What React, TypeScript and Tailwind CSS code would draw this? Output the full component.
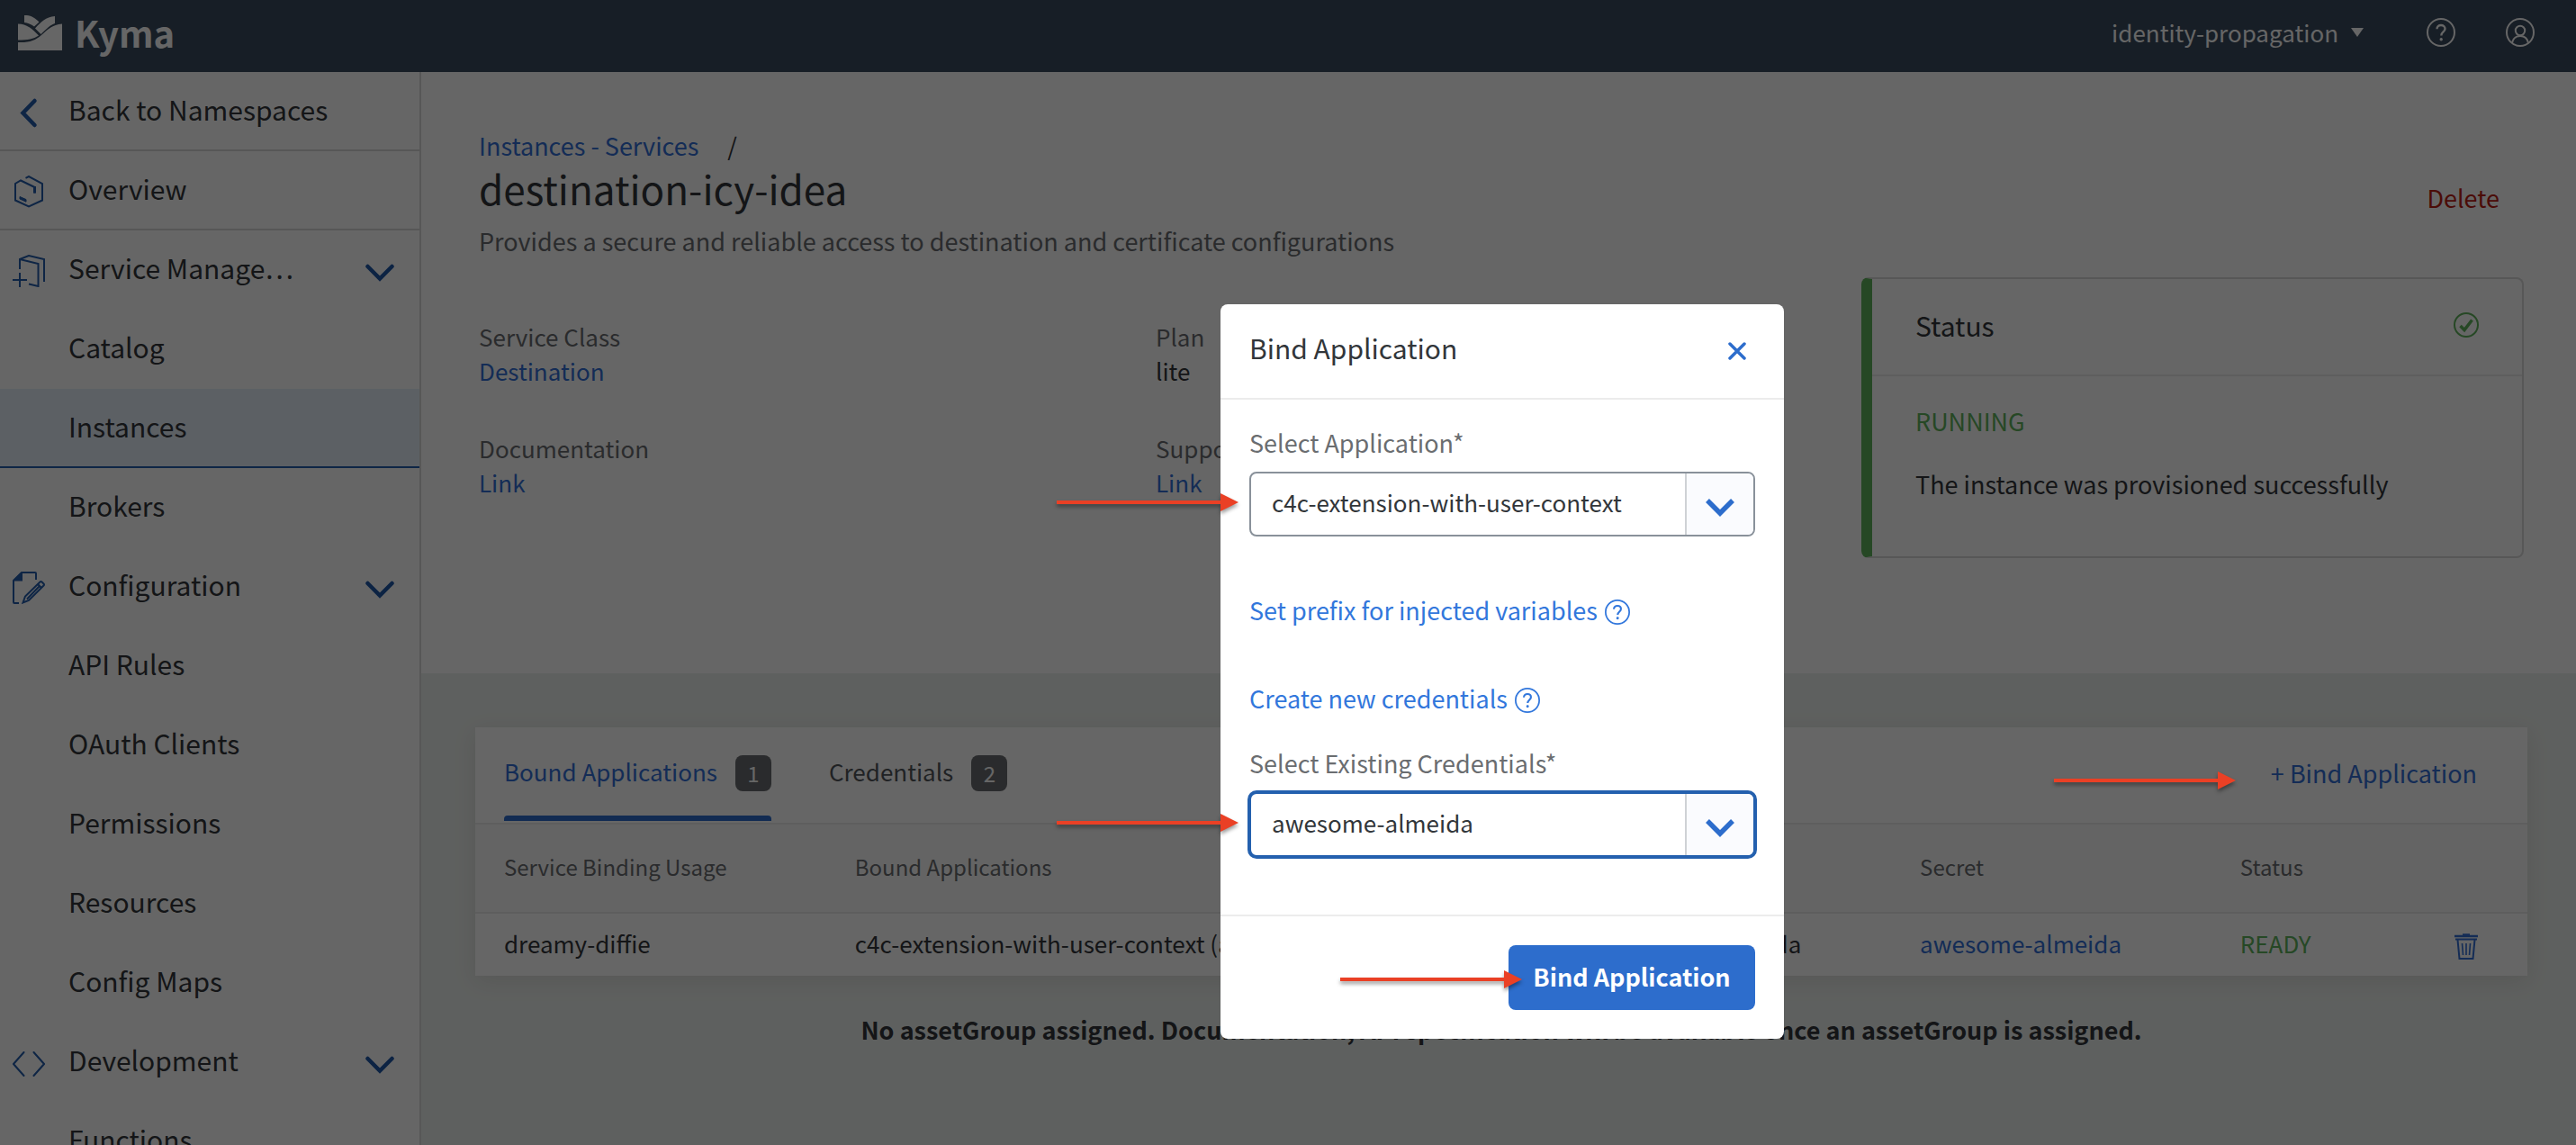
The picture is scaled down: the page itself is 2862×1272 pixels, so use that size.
import React from "react";

type NavEntry = {
  label: string;
  icon?: React.ReactNode;
  kind: "top" | "group" | "leaf";
  selected?: boolean;
};

function KymaLogo() {
  return (
    <svg viewBox="0 0 49 39" className="h-[39px] w-[49px] shrink-0" fill="#fff" aria-hidden="true">
      <path d="M7 0c7-.5 12 3 16.500 7.500L18 12.500C14.500 10 11 8.500 7 8z" />
      <path d="M41 1v8c-5 1.500-9 6-15.500 12L19 14.500C25 8 31 1.500 41 1z" />
      <path d="M0 9.500c10 0 15.500 5.500 23 13-6 4-12 5-23 5z" />
      <path d="M0 30c13 .5 19-2 26-8 7-6.500 12-11.500 23-12.500V39H0z" />
    </svg>
  );
}

function HelpIcon({ className }: { className: string }) {
  return (
    <svg viewBox="0 0 32 32" className={className} fill="none" stroke="currentColor" strokeWidth="2" aria-hidden="true">
      <circle cx="16" cy="16" r="15" />
      <path d="M11.500 12.200c0-2.600 1.900-4.200 4.500-4.200s4.500 1.600 4.500 4c0 3.400-4.200 3.400-4.200 7.400" strokeWidth="2.400" />
      <circle cx="16.200" cy="23.800" r="1.100" fill="currentColor" strokeWidth="1.200" />
    </svg>
  );
}

function UserIcon() {
  return (
    <svg viewBox="0 0 32 32" className="size-8" fill="none" stroke="currentColor" strokeWidth="2" aria-hidden="true">
      <circle cx="16" cy="16" r="15" />
      <circle cx="16" cy="14" r="5.200" />
      <path d="M7 28c1-5.500 4.500-8 9-8s8 2.500 9 8" />
    </svg>
  );
}

function ChevronDown({ className }: { className: string }) {
  return (
    <svg viewBox="0 0 32 20" className={className} fill="none" stroke="currentColor" strokeWidth="4.500" strokeLinecap="round" aria-hidden="true">
      <path d="M2.500 3 16 16.500 29.500 3" />
    </svg>
  );
}

function ComboChevron() {
  return (
    <svg viewBox="0 0 32 20" className="mt-2 h-5 w-8" fill="none" stroke="currentColor" strokeWidth="5.500" aria-hidden="true">
      <path d="M2 2 16 16 30 2" />
    </svg>
  );
}

const backIcon = (
  <svg viewBox="0 0 36 36" className="size-9" fill="none" stroke="currentColor" strokeWidth="4.500" strokeLinecap="round" aria-hidden="true">
    <path d="M24.500 5 11.500 18.500 24.500 32" />
  </svg>
);

const overviewIcon = (
  <svg viewBox="0 0 36 36" className="size-9" fill="none" stroke="currentColor" strokeWidth="2" aria-hidden="true">
    <path d="M14.500 2.800 18 1l15 8v18.500L18 34.500l-15-7V9l6-3.500 15.500 7.500v6.500" />
    <path d="M24.500 12v7.500" strokeWidth="3" />
    <path d="M8 23.500v2.500l7 3.200v-2.600z" fill="currentColor" strokeWidth="1" />
  </svg>
);

const serviceIcon = (
  <svg viewBox="0 0 36 36" className="size-9" fill="none" stroke="currentColor" strokeWidth="2" aria-hidden="true">
    <path d="M8 16V5l10-4 17 4v25" />
    <path d="M8 5l20.500 5v25L18 32.500" />
    <path d="M0 28h16M8 20v16" />
  </svg>
);

const configIcon = (
  <svg viewBox="0 0 36 36" className="size-9" fill="none" stroke="currentColor" strokeWidth="2" aria-hidden="true">
    <path d="M26 9V2q0-1-1-1H10L1 10v24q0 1 1 1h5" />
    <path d="M1 10.500V9l8.500-8H11v9.500z" fill="currentColor" stroke="none" />
    <path d="M11.500 34.500l2.500-7L30.500 11.500q1-1 2 0l2 2q1 1 0 2L18 32z" />
    <path d="M28 14l4 4M16 30.500 29.500 16.500" />
  </svg>
);

const codeIcon = (
  <svg viewBox="0 0 36 36" className="size-9" fill="none" stroke="currentColor" strokeWidth="2" strokeLinecap="round" aria-hidden="true">
    <path d="M12.500 6 1 19l11.500 13M23.500 6 35 19 23.500 32" />
  </svg>
);

const nav: NavEntry[] = [
  { label: "Back to Namespaces", icon: backIcon, kind: "top" },
  { label: "Overview", icon: overviewIcon, kind: "top" },
  { label: "Service Manage…", icon: serviceIcon, kind: "group" },
  { label: "Catalog", kind: "leaf" },
  { label: "Instances", kind: "leaf", selected: true },
  { label: "Brokers", kind: "leaf" },
  { label: "Configuration", icon: configIcon, kind: "group" },
  { label: "API Rules", kind: "leaf" },
  { label: "OAuth Clients", kind: "leaf" },
  { label: "Permissions", kind: "leaf" },
  { label: "Resources", kind: "leaf" },
  { label: "Config Maps", kind: "leaf" },
  { label: "Development", icon: codeIcon, kind: "group" },
  { label: "Functions", kind: "leaf" },
];

function NavItem({ entry }: { entry: NavEntry }) {
  const border = entry.selected
    ? "border-[#2460ae] bg-[#e6effa]"
    : entry.kind === "top"
      ? "border-[#d9d9d9]"
      : "border-transparent";
  const shared = `flex h-[88px] w-full items-center border-b-2 pr-7 pl-[14px] text-left ${border}`;
  const inner = (
    <>
      <span className="mr-[26px] flex size-9 shrink-0 items-center justify-center pt-1 text-[#245dac]">{entry.icon}</span>
      <span className="flex-1 pb-1 text-[30px] leading-10 text-[#32363a]">{entry.label}</span>
      {entry.kind === "group" && <ChevronDown className="mt-2 h-5 w-8 text-[#1f58a8]" />}
    </>
  );
  return (
    <li>
      {entry.kind === "group" ? (
        <button type="button" className={shared}>{inner}</button>
      ) : (
        <a href="#" className={shared} aria-current={entry.selected ? "page" : undefined}>{inner}</a>
      )}
    </li>
  );
}

function Arrow() {
  return (
    <svg viewBox="0 0 202 20" className="h-5 w-[202px] overflow-visible drop-shadow-[0_3px_2px_rgba(0,0,0,0.4)]" fill="#ea4025" aria-hidden="true">
      <path d="M0 8h182V0l20 10-20 10v-8H0z" />
    </svg>
  );
}

function Fact({ term, children }: { term: string; children: React.ReactNode }) {
  return (
    <div>
      <dt className="text-[#6a6d70]">{term}</dt>
      <dd>{children}</dd>
    </div>
  );
}

function StatusCard() {
  return (
    <section className="rounded-lg border-2 border-l-12 border-[#d9d9d9] border-l-[#60b35c] bg-white">
      <div className="flex h-[108px] items-center justify-between border-b-2 border-[#ececec] pr-12 pb-1 pl-12">
        <h2 className="text-[30px]">Status</h2>
        <svg viewBox="0 0 28 28" className="size-7 text-[#60b35c]" fill="none" stroke="currentColor" strokeWidth="2" aria-label="Running">
          <circle cx="14" cy="14" r="13" />
          <path d="M7.500 15 12 19.500 20.500 8.500" strokeWidth="3.500" />
        </svg>
      </div>
      <div className="px-12 pt-[30px] pb-[60px] leading-10">
        <p className="text-[#60b35c]">RUNNING</p>
        <p className="mt-[30px]">The instance was provisioned successfully</p>
      </div>
    </section>
  );
}

function Tab({ label, count, active }: { label: string; count: number; active?: boolean }) {
  return (
    <button type="button" role="tab" aria-selected={!!active} className="flex h-[104px] flex-col">
      <span className="flex flex-1 items-center gap-5">
        <span className={active ? "text-[#326fd6]" : "text-[#51555a]"}>{label}</span>
        <span className="mt-1 flex size-10 items-center justify-center rounded-lg bg-[#6a6d70] text-2xl text-white">{count}</span>
      </span>
      <span className={active ? "h-[6px] w-full rounded-t bg-[#2d6dcc]" : "h-[6px] w-full"} />
    </button>
  );
}

function TrashIcon() {
  return (
    <svg viewBox="0 0 26 29" className="mt-1 h-[29px] w-[26px]" fill="none" stroke="currentColor" strokeWidth="2" aria-hidden="true">
      <path d="M0 3h26M9 1.500h8" strokeWidth="2.400" />
      <path d="M1 6.500h24M3.500 7l2 21h15l2-21" />
      <path d="M8.500 11l1 13M13 11v13M17.500 11l-1 13" strokeWidth="1.600" />
    </svg>
  );
}

function BoundApplications() {
  return (
    <section className="bg-white text-[26px] shadow-[0_6px_24px_rgba(60,40,40,0.1)]">
      <div className="flex h-[108px] items-start justify-between border-b-2 border-[#ececec] pr-14 pl-8">
        <div role="tablist" className="flex gap-16">
          <Tab label="Bound Applications" count={1} active />
          <Tab label="Credentials" count={2} />
        </div>
        <div className="relative self-center pb-1">
          <div className="absolute top-1/2 right-full z-20 mt-[-4px] mr-[39px]">
            <Arrow />
          </div>
          <button type="button" className="text-[27px] text-[#326fd6]">+ Bind Application</button>
        </div>
      </div>
      <table className="w-full table-fixed text-left">
        <colgroup>
          <col className="w-[18.500%]" />
          <col className="w-[36.300%]" />
          <col className="w-[15.600%]" />
          <col className="w-[15.600%]" />
          <col className="w-[9%]" />
          <col className="w-[5%]" />
        </colgroup>
        <thead>
          <tr className="h-[98px] border-b-2 border-[#ececec] bg-[#fafafa] text-2xl text-[#6a6d70]">
            <th scope="col" className="pb-1 pl-8 font-normal">Service Binding Usage</th>
            <th scope="col" className="pb-1 font-normal">Bound Applications</th>
            <th scope="col" className="pb-1 font-normal">Service Binding</th>
            <th scope="col" className="pb-1 font-normal">Secret</th>
            <th scope="col" className="pb-1 font-normal">Status</th>
            <th scope="col" aria-label="Actions" />
          </tr>
        </thead>
        <tbody>
          <tr className="h-[70px]">
            <td className="pb-1 pl-8">dreamy-diffie</td>
            <td className="pb-1">c4c-extension-with-user-context (application)</td>
            <td className="pb-1">awesome-almeida</td>
            <td className="pb-1"><a href="#" className="text-[#326fd6]">awesome-almeida</a></td>
            <td className="pb-1 text-[#60b35c]">READY</td>
            <td className="pr-[55px]">
              <button type="button" aria-label="Delete binding" className="ml-auto block text-[#326fd6]"><TrashIcon /></button>
            </td>
          </tr>
        </tbody>
      </table>
    </section>
  );
}

function ComboBox({ id, label, value, focused }: { id: string; label: string; value: string; focused?: boolean }) {
  const frame = focused
    ? "border-[#2460ae] ring-2 ring-[#2460ae]"
    : "border-[#89919a]";
  return (
    <div>
      <label htmlFor={id} className="block text-[#6a6d70]">{label}</label>
      <div className="relative mt-3">
        <div className="absolute top-1/2 right-full mt-[-12px] mr-3">
          <Arrow />
        </div>
        <div className={`flex h-[72px] overflow-hidden rounded-lg border-2 bg-white ${frame}`}>
          <input id={id} defaultValue={value} className="min-w-0 flex-1 pb-1 pl-[23px] text-[26px] outline-none" />
          <button type="button" aria-label={`Show options for ${label}`} className="flex w-[76px] items-center justify-center border-l-2 border-[#cfd2d5] bg-[#fafbfe] text-[#2d6dcc]">
            <ComboChevron />
          </button>
        </div>
      </div>
    </div>
  );
}

function BindDialog() {
  return (
    <div role="dialog" aria-modal="true" aria-labelledby="bind-title" className="w-[626px] rounded-lg bg-white">
      <div className="flex h-[106px] items-center justify-between border-b-2 border-[#ececec] pr-[42px] pl-8">
        <h2 id="bind-title" className="pb-2 text-[30px]">Bind Application</h2>
        <button type="button" aria-label="Close" className="text-[#2d6dcc]">
          <svg viewBox="0 0 20 20" className="size-5" fill="none" stroke="currentColor" strokeWidth="3.500" strokeLinecap="round" aria-hidden="true">
            <path d="M2 2 18 18M18 2 2 18" />
          </svg>
        </button>
      </div>
      <div className="px-8 pt-7 pb-16">
        <ComboBox id="application" label="Select Application*" value="c4c-extension-with-user-context" />
        <button type="button" className="mt-[62px] flex items-center gap-2 text-[#3277dc]">
          Set prefix for injected variables
          <HelpIcon className="mt-1 size-7" />
        </button>
        <button type="button" className="mt-[58px] mb-8 flex items-center gap-2 text-[#3277dc]">
          Create new credentials
          <HelpIcon className="mt-1 size-7" />
        </button>
        <ComboBox id="credentials" label="Select Existing Credentials*" value="awesome-almeida" focused />
      </div>
      <div className="flex justify-end border-t-2 border-[#ececec] px-8 py-8">
        <div className="relative">
          <button type="button" className="h-[72px] w-[274px] rounded-lg bg-[#2d6dcc] pb-0.5 font-bold text-white">Bind Application</button>
          <div className="absolute top-1/2 right-full mt-[-8px] mr-[-15px]">
            <Arrow />
          </div>
        </div>
      </div>
    </div>
  );
}

export default function App() {
  return (
    <div className="relative flex h-screen flex-col overflow-hidden bg-white font-['Noto_Sans_CJK_SC',sans-serif] text-[27px] leading-10 text-[#32363a]">
      <header className="flex h-20 shrink-0 items-center bg-[#3a4b5f] pr-[46px] pb-2 pl-5 text-white">
        <a href="#" className="flex items-center gap-[14px]">
          <KymaLogo />
          <span className="text-[40px] leading-[60px] font-bold">Kyma</span>
        </a>
        <button type="button" className="ml-auto flex items-center gap-[14px] text-[26px]">
          identity-propagation
          <svg viewBox="0 0 14 10" className="h-[10px] w-[14px]" fill="currentColor" aria-hidden="true">
            <path d="M0 0h14L7 10z" />
          </svg>
        </button>
        <button type="button" aria-label="Help" className="ml-[70px]"><HelpIcon className="size-8" /></button>
        <button type="button" aria-label="Account" className="ml-14"><UserIcon /></button>
      </header>

      <div className="flex min-h-0 flex-1">
        <nav className="w-[468px] shrink-0 overflow-hidden border-r-2 border-[#d9d9d9] bg-white">
          <ul>
            {nav.map((entry) => (
              <NavItem key={entry.label} entry={entry} />
            ))}
          </ul>
        </nav>

        <main className="min-w-0 flex-1 bg-[#ecf0ed]">
          <div className="bg-white pt-[62px] pr-[58px] pb-32 pl-16">
            <div className="flex items-center justify-between pr-[27px]">
              <div>
                <div className="flex gap-8">
                  <a href="#" className="text-[#326fd6]">Instances - Services</a>
                  <span>/</span>
                </div>
                <h1 className="mb-3 text-[44px] leading-[54px]">destination-icy-idea</h1>
                <p className="text-[#6a6d70]">Provides a secure and reliable access to destination and certificate configurations</p>
              </div>
              <button type="button" className="mt-[10px] text-[#bb2013]">Delete</button>
            </div>
            <div className="mt-5 grid grid-cols-[47fr_23fr] gap-8">
              <dl className="grid grid-cols-2 content-start gap-y-12 pt-[47px] text-[26px] leading-[38px]">
                <Fact term="Service Class"><a href="#" className="text-[#326fd6]">Destination</a></Fact>
                <Fact term="Plan">lite</Fact>
                <Fact term="Documentation"><a href="#" className="text-[#326fd6]">Link</a></Fact>
                <Fact term="Support"><a href="#" className="text-[#326fd6]">Link</a></Fact>
              </dl>
              <StatusCard />
            </div>
          </div>

          <div className="pt-[60px] pr-[54px] pl-[60px]">
            <BoundApplications />
            <p className="mt-10 text-center font-bold">
              No assetGroup assigned. Documentation, API specification will be available once an assetGroup is assigned.
            </p>
          </div>
        </main>
      </div>

      <div className="absolute inset-0 z-10 flex items-start justify-center bg-black/60 pt-[338px] pl-[476px]">
        <BindDialog />
      </div>
    </div>
  );
}
